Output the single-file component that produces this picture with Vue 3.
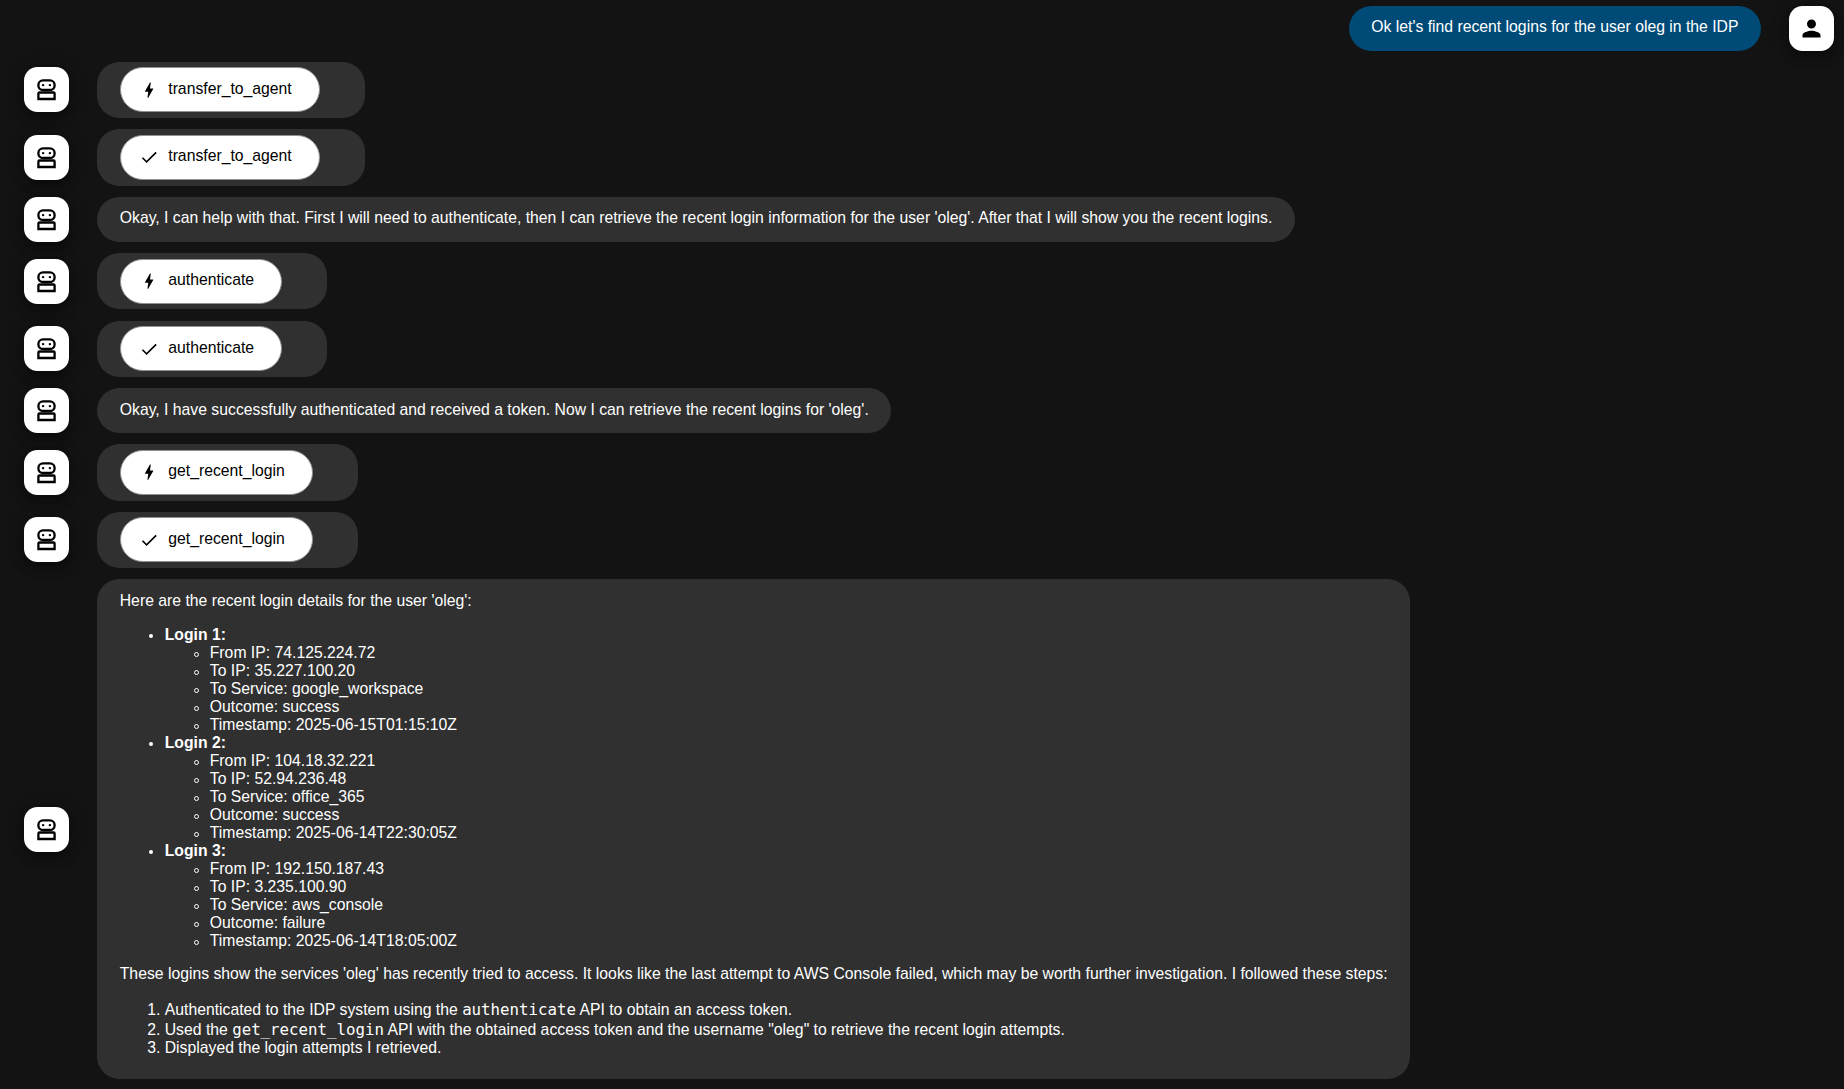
<script setup>
const rows = [
  { kind: 'call', text: 'transfer_to_agent' },
  { kind: 'done', text: 'transfer_to_agent' },
  {
    kind: 'text',
    text: "Okay, I can help with that. First I will need to authenticate, then I can retrieve the recent login information for the user 'oleg'. After that I will show you the recent logins.",
  },
  { kind: 'call', text: 'authenticate' },
  { kind: 'done', text: 'authenticate' },
  {
    kind: 'text',
    text: "Okay, I have successfully authenticated and received a token. Now I can retrieve the recent logins for 'oleg'.",
  },
  { kind: 'call', text: 'get_recent_login' },
  { kind: 'done', text: 'get_recent_login' },
  { kind: 'report' },
]

const logins = [
  { from: '74.125.224.72', to: '35.227.100.20', service: 'google_workspace', outcome: 'success', time: '2025-06-15T01:15:10Z' },
  { from: '104.18.32.221', to: '52.94.236.48', service: 'office_365', outcome: 'success', time: '2025-06-14T22:30:05Z' },
  { from: '192.150.187.43', to: '3.235.100.90', service: 'aws_console', outcome: 'failure', time: '2025-06-14T18:05:00Z' },
]
</script>

<template>
  <main class="chat">
    <div class="row user">
      <div class="bubble message">Ok let's find recent logins for the user oleg in the IDP</div>
      <div class="avatar">
        <svg class="person" viewBox="0 0 24 24"><path d="M12 12c2.21 0 4-1.79 4-4s-1.79-4-4-4-4 1.79-4 4 1.79 4 4 4zm0 2c-2.67 0-8 1.34-8 4v2h16v-2c0-2.66-5.33-4-8-4z" /></svg>
      </div>
    </div>
    <div v-for="(row, i) in rows" :key="i" class="row">
      <div class="avatar">
        <svg class="robot" viewBox="0 0 27 27">
          <rect x="5.4" y="4.4" width="16.2" height="9.6" rx="4.6" />
          <path d="M5.400 23V17.600q0-1.100 1.100-1.100H20.500q1.100 0 1.100 1.100V23Z" />
          <circle cx="10.100" cy="9.100" r="1.200" />
          <circle cx="16.900" cy="9.100" r="1.200" />
        </svg>
      </div>
      <div v-if="row.kind === 'text'" class="bubble message">{{ row.text }}</div>
      <div v-else-if="row.kind === 'report'" class="bubble report">
        <p>Here are the recent login details for the user 'oleg':</p>
        <ul>
          <li v-for="(login, n) in logins" :key="n">
            <strong>Login {{ n + 1 }}:</strong>
            <ul>
              <li>From IP: {{ login.from }}</li>
              <li>To IP: {{ login.to }}</li>
              <li>To Service: {{ login.service }}</li>
              <li>Outcome: {{ login.outcome }}</li>
              <li>Timestamp: {{ login.time }}</li>
            </ul>
          </li>
        </ul>
        <p>These logins show the services 'oleg' has recently tried to access. It looks like the last attempt to AWS Console failed, which may be worth further investigation. I followed these steps:</p>
        <ol>
          <li class="tall">Authenticated to the IDP system using the <code>authenticate</code> API to obtain an access token.</li>
          <li class="tall">Used the <code>get_recent_login</code> API with the obtained access token and the username "oleg" to retrieve the recent login attempts.</li>
          <li>Displayed the login attempts I retrieved.</li>
        </ol>
      </div>
      <div v-else class="bubble tool">
        <button class="chip">
          <svg v-if="row.kind === 'call'" viewBox="0 0 24 24"><path d="M11 21h-1l1-7H7.500c-.58 0-.57-.32-.38-.66.190-.34.050-.08.070-.12C8.480 10.940 10.420 7.540 13 3h1l-1 7h3.500c.49 0 .56.33.47.51l-.07.15C12.960 17.550 11 21 11 21z" /></svg>
          <svg v-else viewBox="0 0 24 24"><path d="M9 16.170 4.830 12l-1.420 1.410L9 19 21 7l-1.410-1.410z" /></svg>
          <span>{{ row.text }}</span>
        </button>
      </div>
    </div>
  </main>
</template>

<style>
body {
  margin: 0;
  background: #131313;
}
</style>

<style scoped>
.chat {
  box-sizing: border-box;
  height: 1089px;
  overflow: hidden;
  padding: 5.54px 10px 0 24px;
  display: flex;
  flex-direction: column;
  gap: 11.25px;
  background: #131313;
  color: #fff;
  font: 15.75px/18px "Liberation Sans", Arial, sans-serif;
}
.row {
  display: flex;
  align-items: center;
  gap: 28px;
}
.user {
  justify-content: flex-end;
}
.avatar {
  flex: none;
  width: 45px;
  height: 45px;
  border-radius: 13.5px;
  background: #fff;
  display: flex;
  align-items: center;
  justify-content: center;
  box-shadow: 0 3px 6px -1px rgba(0, 0, 0, 0.3), 0 7px 11px rgba(0, 0, 0, 0.18), 0 1px 20px rgba(0, 0, 0, 0.14);
}
.avatar svg {
  width: 27px;
  height: 27px;
}
.robot rect,
.robot path {
  fill: none;
  stroke: #000;
  stroke-width: 2.3px;
}
.bubble {
  box-sizing: border-box;
  border-radius: 22.5px;
  background: #303030;
  padding: 5.625px 22.25px 5.625px 22.75px;
}
.message {
  height: 45px;
  padding-top: 12.5px;
  white-space: nowrap;
}
.user .bubble {
  background: #004a77;
  padding-left: 22.5px;
  padding-right: 22.5px;
}
.tool {
  height: 56.25px;
  padding-left: 23px;
  padding-right: 45px;
}
.chip {
  box-sizing: border-box;
  height: 45px;
  margin: 0;
  border: 1px solid #8e918f;
  border-radius: 22.5px;
  background: #fff;
  color: #000;
  font: inherit;
  padding: 0 27.2px 0 18px;
  display: flex;
  align-items: center;
  gap: 9px;
}
.chip svg {
  width: 20.25px;
  height: 20.25px;
}
.chip span {
  padding-bottom: 2.3px;
}
.report {
  height: 499.5px;
  padding-top: 12.5px;
  white-space: nowrap;
}
p,
ul,
ol {
  margin: 0 0 15.75px;
}
ul,
ol {
  padding-left: 45px;
}
ul {
  list-style: none;
}
ul ul {
  margin: 0;
}
ul > li::before {
  content: "";
  display: inline-block;
  width: 4px;
  height: 4px;
  margin: 0 11.5px 0 -15.5px;
  border-radius: 50%;
  background: #fff;
  vertical-align: 2px;
}
ul ul > li::before {
  box-sizing: border-box;
  width: 5px;
  height: 5px;
  margin: 0 10.5px 0 -15.5px;
  border: 1px solid #fff;
  background: none;
  vertical-align: 1px;
}
.tall {
  padding-top: 2px;
}
code {
  font: 15.75px/1 "DejaVu Sans Mono", monospace;
}
</style>
